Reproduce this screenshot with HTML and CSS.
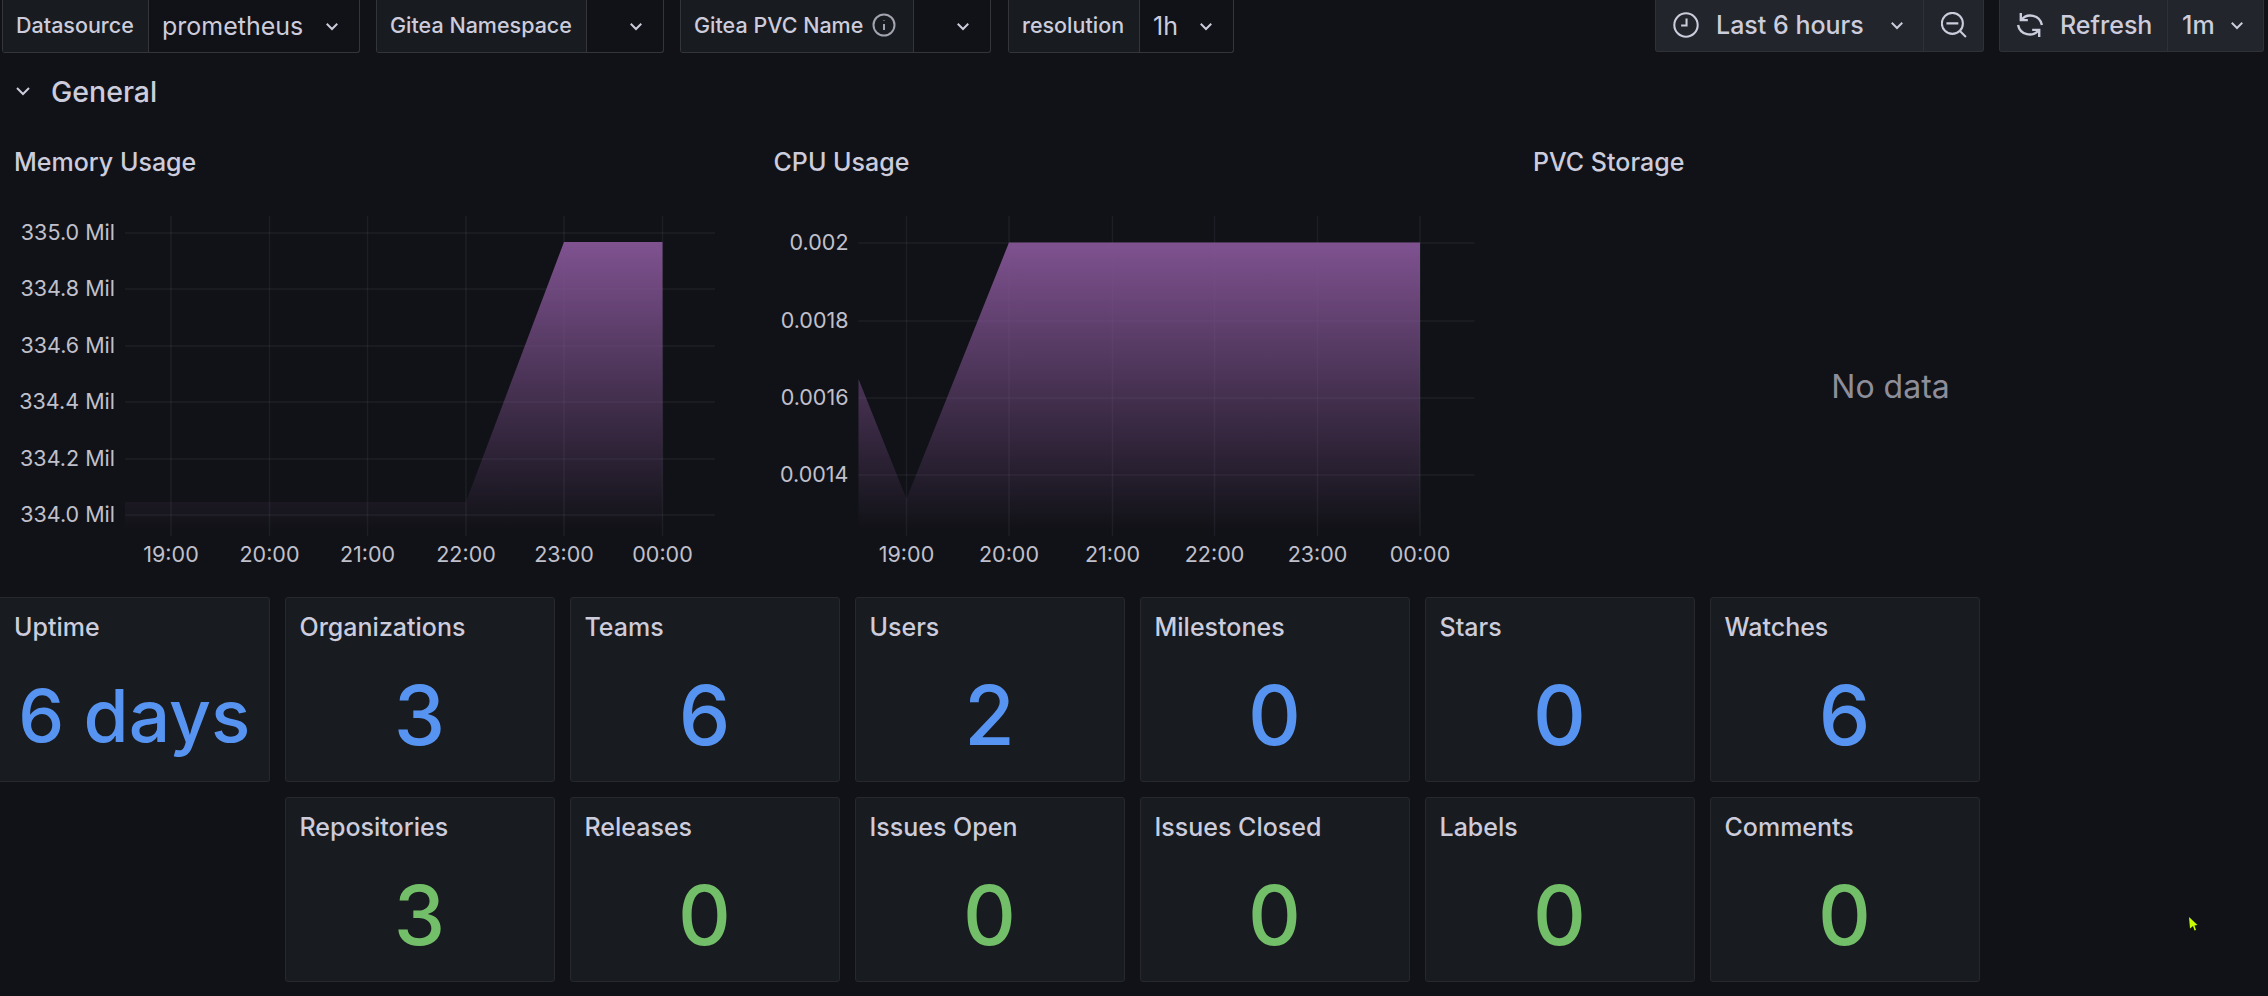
FILE: index.html
```html
<!DOCTYPE html>
<html lang="en">
<head>
    <meta charset="UTF-8">
    <meta name="viewport" content="width=device-width, initial-scale=1.0">
    <link rel="stylesheet" href="styles.css">
</head>
<body>

<nav class="toolbar">
    <div class="var-group var-ds">
        <span class="var-label">Datasource</span>
        <span class="var-value">prometheus
            <svg class="chev" viewBox="0 0 12 12"><path d="M2.500 4.500 6 8l3.500-3.500"/></svg></span>
    </div>
    <div class="var-group var-ns">
        <span class="var-label">Gitea Namespace</span>
        <span class="var-value">
            <svg class="chev" viewBox="0 0 12 12"><path d="M2.500 4.500 6 8l3.500-3.500"/></svg></span>
    </div>
    <div class="var-group var-pvc">
        <span class="var-label">Gitea PVC Name
            <svg class="info" viewBox="0 0 24 24"><circle cx="12" cy="12" r="10.500"/><path d="M12 11v6M12 7v.5"/></svg></span>
        <span class="var-value">
            <svg class="chev" viewBox="0 0 12 12"><path d="M2.500 4.500 6 8l3.500-3.500"/></svg></span>
    </div>
    <div class="var-group var-res">
        <span class="var-label">resolution</span>
        <span class="var-value">1h
            <svg class="chev" viewBox="0 0 12 12"><path d="M2.500 4.500 6 8l3.500-3.500"/></svg></span>
    </div>

    <div class="btn-group btn-time">
        <button class="btn btn-range">
            <svg class="icon" viewBox="0 0 24 24"><circle cx="12" cy="12" r="10.800"/><path d="M12.500 6V12.500H7.500"/></svg>
            Last 6 hours
            <svg class="chev" viewBox="0 0 12 12"><path d="M2.500 4.500 6 8l3.500-3.500"/></svg>
        </button>
        <button class="btn btn-zoom">
            <svg class="icon" viewBox="0 0 24 24"><circle cx="10.500" cy="10.500" r="9.700"/><path d="M5 10.500h11M17.500 17.500l5.500 5.500"/></svg>
        </button>
    </div>
    <div class="btn-group btn-refresh">
        <button class="btn btn-run">
            <svg class="icon icon-sync" viewBox="0 0 24 24"><path d="M3.500 1v6.500H10M3.800 7.500A10.800 10.800 0 0 1 23 12M20.500 23v-6.500H14M20.200 16.500A10.800 10.800 0 0 1 1 12"/></svg>
            Refresh
        </button>
        <button class="btn btn-interval">1m
            <svg class="chev" viewBox="0 0 12 12"><path d="M2.500 4.500 6 8l3.500-3.500"/></svg>
        </button>
    </div>
</nav>

<div class="row-title">
    <svg class="chev" viewBox="0 0 12 12"><path d="M2 4 6 8l4-4"/></svg>
    General
</div>

<div class="charts">
    <section class="panel">
        <h2>Memory Usage</h2>
        <svg class="plot" viewBox="0 205 743 345">
            <defs>
                <linearGradient id="fade1" gradientUnits="userSpaceOnUse" x1="0" y1="243" x2="0" y2="530">
                    <stop offset="0" stop-color="#7f5290"/>
                    <stop offset="1" stop-color="#7f5290" stop-opacity="0"/>
                </linearGradient>
            </defs>
            <path class="grid" d="M125 234H715M125 290H715M125 347H715M125 403H715M125 460H715M125 516H715"/>
            <path class="grid" d="M171 217V537M269.500 217V537M367.500 217V537M466 217V537M564 217V537M662.500 217V537"/>
            <path fill="url(#fade1)" d="M125 503H466L564 243H662.500V530H125Z"/>
            <g class="ticks-y">
                <text x="115" y="240.500">335.0 Mil</text>
                <text x="115" y="297">334.8 Mil</text>
                <text x="115" y="354">334.6 Mil</text>
                <text x="115" y="410">334.4 Mil</text>
                <text x="115" y="467">334.2 Mil</text>
                <text x="115" y="522.500">334.0 Mil</text>
            </g>
            <g class="ticks-x">
                <text x="171" y="562.500">19:00</text>
                <text x="269.500" y="562.500">20:00</text>
                <text x="367.500" y="562.500">21:00</text>
                <text x="466" y="562.500">22:00</text>
                <text x="564" y="562.500">23:00</text>
                <text x="662.500" y="562.500">00:00</text>
            </g>
        </svg>
    </section>

    <section class="panel">
        <h2>CPU Usage</h2>
        <svg class="plot" viewBox="759.500 205 743 345">
            <defs>
                <linearGradient id="fade2" gradientUnits="userSpaceOnUse" x1="0" y1="243" x2="0" y2="530">
                    <stop offset="0" stop-color="#7f5290"/>
                    <stop offset="1" stop-color="#7f5290" stop-opacity="0"/>
                </linearGradient>
            </defs>
            <path class="grid" d="M858 244H1474M858 322H1474M858 399H1474M858 476H1474"/>
            <path class="grid" d="M906 217V537M1008.500 217V537M1112 217V537M1214 217V537M1317 217V537M1419.500 217V537"/>
            <path fill="url(#fade2)" d="M858 380 906 500 1008.500 243.500H1419.500V530H858Z"/>
            <g class="ticks-y">
                <text x="848" y="251">0.002</text>
                <text x="848" y="329">0.0018</text>
                <text x="848" y="406">0.0016</text>
                <text x="848" y="483">0.0014</text>
            </g>
            <g class="ticks-x">
                <text x="906" y="562.500">19:00</text>
                <text x="1008.500" y="562.500">20:00</text>
                <text x="1112" y="562.500">21:00</text>
                <text x="1214" y="562.500">22:00</text>
                <text x="1317" y="562.500">23:00</text>
                <text x="1419.500" y="562.500">00:00</text>
            </g>
        </svg>
    </section>

    <section class="panel">
        <h2>PVC Storage</h2>
        <div class="no-data">No data</div>
    </section>
</div>

<div class="stats">
    <div class="stat"><h3>Uptime</h3><div class="value blue small">6 days</div></div>
    <div class="stat"><h3>Organizations</h3><div class="value blue">3</div></div>
    <div class="stat"><h3>Teams</h3><div class="value blue">6</div></div>
    <div class="stat"><h3>Users</h3><div class="value blue">2</div></div>
    <div class="stat"><h3>Milestones</h3><div class="value blue">0</div></div>
    <div class="stat"><h3>Stars</h3><div class="value blue">0</div></div>
    <div class="stat"><h3>Watches</h3><div class="value blue">6</div></div>

    <div class="stat second"><h3>Repositories</h3><div class="value green">3</div></div>
    <div class="stat"><h3>Releases</h3><div class="value green">0</div></div>
    <div class="stat"><h3>Issues Open</h3><div class="value green">0</div></div>
    <div class="stat"><h3>Issues Closed</h3><div class="value green">0</div></div>
    <div class="stat"><h3>Labels</h3><div class="value green">0</div></div>
    <div class="stat"><h3>Comments</h3><div class="value green">0</div></div>
</div>

<svg class="cursor" viewBox="0 0 10 14"><path d="M0 0 8.500 8 5.500 8.500 7 13 5.500 13.500 4 9 1 11.500Z"/></svg>

</body>
</html>
```
FILE: styles.css
```css
body {
    margin: 0;
    height: 996px;
    overflow: hidden;
    position: relative;
    font-family: Inter, "Noto Sans", sans-serif;
    background-color: #111217;
    color: #ccccdc;
}

svg {
    display: block;
    flex: none;
}

.chev {
    width: 18px;
    height: 18px;
    fill: none;
    stroke: #ccccdc;
    stroke-width: 1.3;
}

.icon {
    width: 26px;
    height: 26px;
    fill: none;
    stroke: #ccccdc;
    stroke-width: 1.9;
}

.icon-sync {
    stroke-width: 2.2;
    overflow: visible;
}

/* top bar */
.toolbar {
    display: flex;
    height: 53px;
    padding-left: 2px;
    box-sizing: border-box;
}

.var-group {
    display: flex;
    box-sizing: border-box;
    margin-right: 16px;
    border: 1px solid #33353b;
    border-top: none;
    border-radius: 0 0 3px 3px;
}

.var-ds { width: 358px; }
.var-ns { width: 288px; }
.var-pvc { width: 311px; margin-right: 17px; }
.var-res { width: 226px; margin-right: 0; }

.var-label {
    display: flex;
    align-items: center;
    gap: 9px;
    padding: 0 0 2px 13px;
    background-color: #181b1f;
    border-right: 1px solid #33353b;
    font-size: 21.500px;
    font-weight: 500;
    white-space: nowrap;
}

.var-ds .var-label { width: 132px; }
.var-ns .var-label { width: 196px; }
.var-pvc .var-label { width: 219px; }
.var-res .var-label { width: 117px; }

.var-label .info {
    width: 24px;
    height: 24px;
    fill: none;
    stroke: #a3a3b0;
    stroke-width: 2;
}

.var-value {
    flex: 1;
    display: flex;
    align-items: center;
    justify-content: flex-end;
    padding-right: 18px;
    font-size: 25px;
}

.var-ds .var-value, .var-res .var-value {
    justify-content: space-between;
    padding-left: 13px;
}

.btn-group {
    display: flex;
    height: 52px;
    background-color: #22252b;
    border: 1px solid #2f3136;
    border-top: none;
    border-radius: 0 0 3px 3px;
    box-sizing: border-box;
}

.btn-time {
    width: 329px;
    margin-left: auto;
    margin-right: 15px;
}

.btn-refresh {
    width: 265px;
    margin-right: 4px;
}

.btn {
    display: flex;
    align-items: center;
    padding: 0 0 2px;
    background: none;
    border: none;
    color: #ccccdc;
    font-family: inherit;
    font-size: 25px;
    font-weight: 500;
    white-space: nowrap;
}

.btn-range {
    width: 268px;
    padding-left: 17px;
    gap: 17px;
    border-right: 1px solid #2f3136;
}

.btn-range .chev { margin-left: 7px; }

.btn-zoom {
    flex: 1;
    justify-content: center;
}

.btn-run {
    width: 168px;
    padding-left: 17px;
    gap: 17px;
    border-right: 1px solid #2f3136;
}

.btn-interval {
    flex: 1;
    padding-left: 14px;
    gap: 13px;
}

/* row header */
.row-title {
    display: flex;
    align-items: center;
    height: 76px;
    padding-left: 14px;
    gap: 19px;
    font-size: 28.500px;
    font-weight: 500;
}

/* charts */
.charts {
    display: grid;
    grid-template-columns: repeat(3, 743px);
    column-gap: 16.500px;
    height: 468px;
}

.panel h2 {
    margin: 0;
    padding: 16px 14px 0;
    height: 60px;
    box-sizing: border-box;
    font-size: 25px;
    font-weight: 500;
    line-height: 34px;
    white-space: nowrap;
}

.plot {
    width: 743px;
    height: 345px;
    margin-top: 15px;
    overflow: visible;
}

.grid {
    fill: none;
    stroke: rgba(204, 204, 220, 0.07);
    stroke-width: 1.5;
}

.ticks-y text, .ticks-x text {
    font-size: 21.500px;
    fill: #c0c0cc;
}

.ticks-y text { text-anchor: end; }
.ticks-x text { text-anchor: middle; }

.no-data {
    display: flex;
    align-items: center;
    justify-content: center;
    height: 332px;
    margin-top: 31px;
    font-size: 32px;
    color: #8e8e9a;
}

/* stat cards */
.stats {
    display: grid;
    grid-template-columns: 269.500px repeat(6, 270px);
    grid-auto-rows: 185px;
    gap: 15px;
}

.stat {
    display: flex;
    flex-direction: column;
    background-color: #181b1f;
    border: 1px solid #26282e;
    border-radius: 3px;
    box-sizing: border-box;
}

.stat:first-child {
    border-left: none;
    border-radius: 0 3px 3px 0;
}

.second {
    grid-column-start: 2;
}

.stat h3 {
    margin: 0;
    padding: 12px 14px 0;
    font-size: 25px;
    font-weight: 500;
    line-height: 34px;
}

.value {
    flex: 1;
    display: flex;
    align-items: center;
    justify-content: center;
    padding-top: 6px;
    font-size: 82px;
    font-weight: 450;
    line-height: 1;
}

.value.small {
    font-size: 73px;
    white-space: nowrap;
}

.blue { color: #5794f2; }
.green { color: #73bf69; }

.cursor {
    position: absolute;
    left: 2189px;
    top: 917px;
    width: 10px;
    height: 14px;
    fill: #c8ff00;
}
```
